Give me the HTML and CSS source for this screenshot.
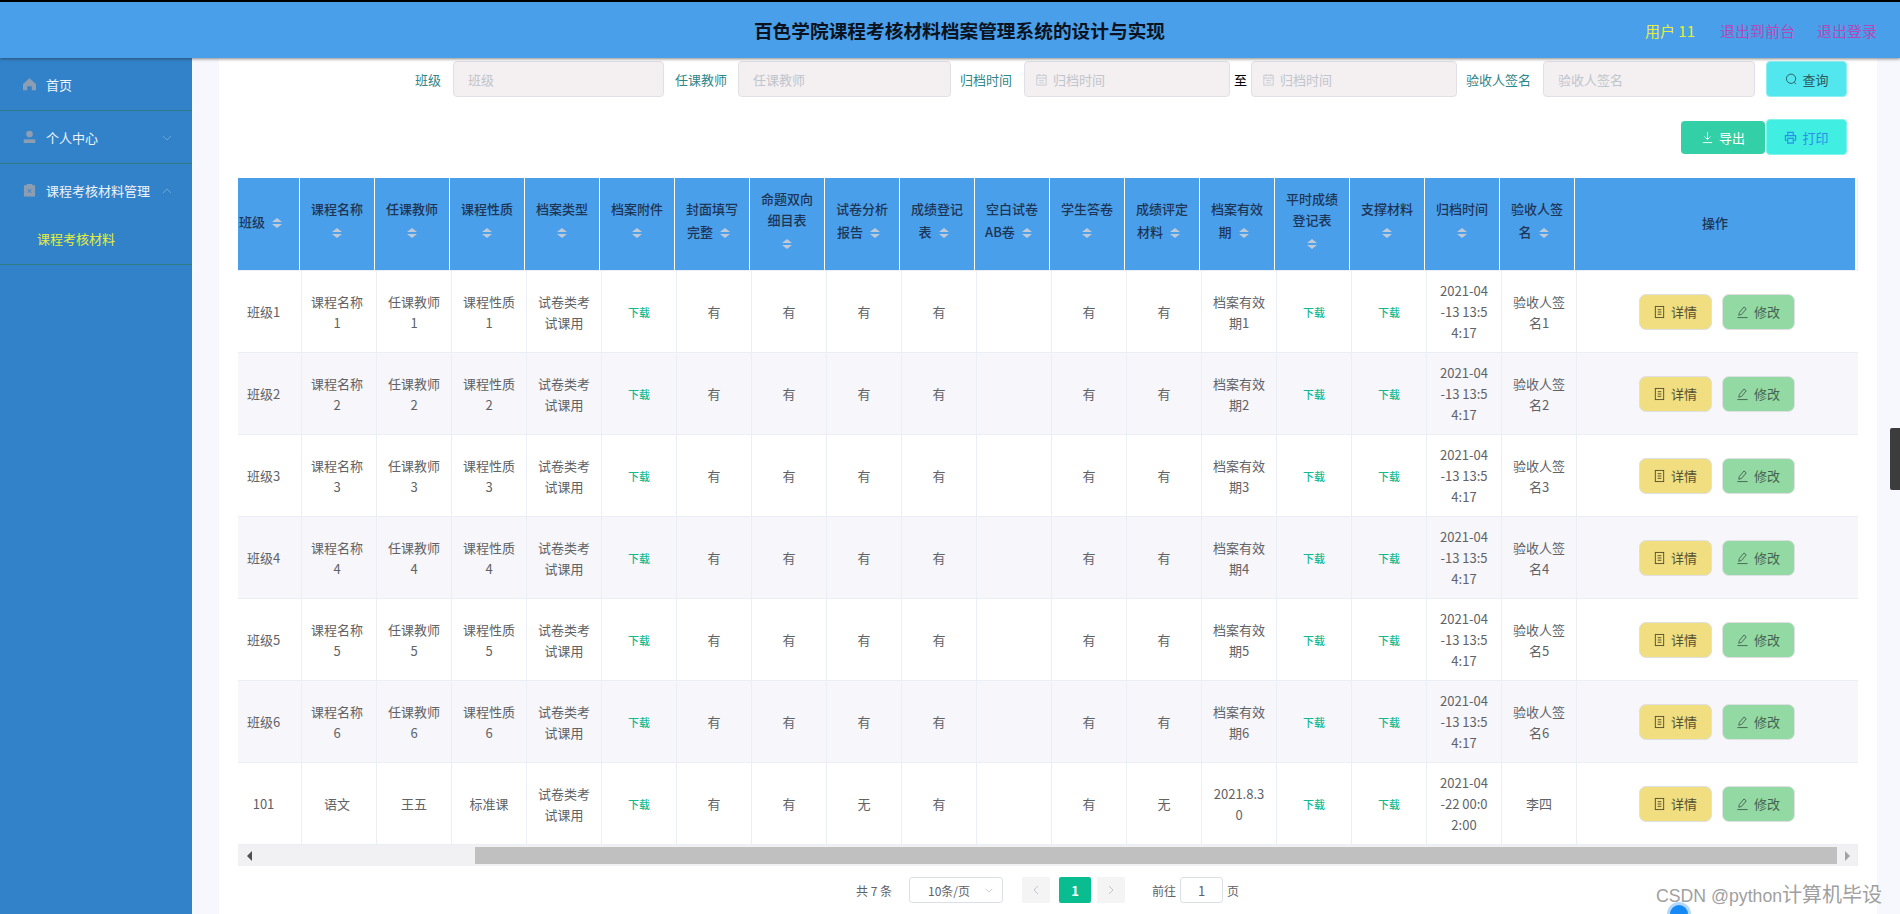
FILE: index.html
```html
<!DOCTYPE html>
<html lang="zh-CN">
<head>
<meta charset="utf-8">
<title>百色学院课程考核材料档案管理系统的设计与实现</title>
<link rel="stylesheet" href="styles.css">
</head>
<body>
<svg class="defs" width="0" height="0" aria-hidden="true">
  <symbol id="i-doc" viewBox="0 0 14 14"><rect x="2.5" y="1" width="9" height="12" fill="none" stroke="currentColor" stroke-width="1"/><path d="M5 4.5h4M5 7h4M5 9.5h4" stroke="currentColor" stroke-width="1" fill="none"/></symbol>
  <symbol id="i-edit" viewBox="0 0 14 14"><path d="M3 10.5 3.6 7.6 8.6 1.6 11 3.6 6 9.6ZM1.5 13H12.5" fill="none" stroke="currentColor" stroke-width="1"/></symbol>
  <symbol id="i-cal" viewBox="0 0 14 14"><rect x="2" y="2.5" width="10" height="10.5" fill="none" stroke="currentColor"/><path d="M2 5.5h10M4.5 8h5M4.5 10.5h5M4.5 1v2M9.5 1v2" stroke="currentColor" fill="none"/></symbol>
</svg>

<header class="topbar">
  <h1 class="title">百色学院课程考核材料档案管理系统的设计与实现</h1>
  <nav class="topnav">
    <span class="user">用户 11</span>
    <a class="out first">退出到前台</a>
    <a class="out">退出登录</a>
  </nav>
</header>

<div class="layout">
  <aside class="side">
    <div class="menu">
      <div class="menu-title">
        <svg class="mi" viewBox="0 0 14 14"><path d="M7 .8 14 7v6.6H9.4V9.4H4.6v4.2H0V7Z" fill="currentColor"/></svg>
        <span>首页</span>
      </div>
    </div>
    <div class="menu">
      <div class="menu-title">
        <svg class="mi" viewBox="0 0 14 14"><circle cx="7" cy="3.8" r="3.6" fill="currentColor"/><path d="M.8 9.5h12.4v4H.8Z" fill="currentColor"/></svg>
        <span>个人中心</span>
        <svg class="chev" viewBox="0 0 10 6"><path d="M1 1l4 4 4-4" fill="none" stroke="currentColor"/></svg>
      </div>
    </div>
    <div class="menu">
      <div class="menu-title">
        <svg class="mi" viewBox="0 0 14 14"><path d="M1 2h3V.5h6V2h3v12H1Z" fill="currentColor"/><path d="M5 6l4 4M9 6l-4 4" stroke="#3282c9" fill="none"/></svg>
        <span>课程考核材料管理</span>
        <svg class="chev" viewBox="0 0 10 6"><path d="M1 5l4-4 4 4" fill="none" stroke="currentColor"/></svg>
      </div>
      <div class="sub">课程考核材料</div>
    </div>
  </aside>

  <main class="main">
    <section class="card">
      <form class="filter">
        <label class="lab l-1">班级</label>
        <input class="inp w-s" placeholder="班级">
        <label class="lab l-2">任课教师</label>
        <input class="inp w-b" placeholder="任课教师">
        <label class="lab l-3">归档时间</label>
        <div class="date"><svg class="cal"><use href="#i-cal"/></svg><input class="dinp" placeholder="归档时间"></div>
        <span class="to">至</span>
        <div class="date"><svg class="cal"><use href="#i-cal"/></svg><input class="dinp" placeholder="归档时间"></div>
        <label class="lab l-4">验收人签名</label>
        <input class="inp w-a" placeholder="验收人签名">
        <button type="button" class="btn search">
          <svg class="bi" viewBox="0 0 14 14"><circle cx="6.5" cy="6.2" r="5" fill="none" stroke="currentColor"/><path d="M10 10l2 2" stroke="currentColor"/></svg>查询
        </button>
      </form>

      <div class="actions">
        <button type="button" class="btn export">
          <svg class="bi" viewBox="0 0 14 14"><path d="M7 1v8M3.8 6 7 9.2 10.2 6M2 12.5h10" fill="none" stroke="currentColor"/></svg>导出
        </button>
        <button type="button" class="btn print">
          <svg class="bi" viewBox="0 0 14 14"><path d="M4 5V1.5h6V5M4 10H1.5V5h11v5H10M4 8h6v5H4Z" fill="none" stroke="currentColor" stroke-width="1.2"/></svg>打印
        </button>
      </div>

      <div class="table-box">
        <table class="thead">
          <colgroup><col class="c-h1"><col span="17" class="c-n"><col class="c-hl"></colgroup>
          <tr>
            <th class="first-h">班级<span class="sort"><i></i><i></i></span></th>
            <th>课程名称<span class="sort"><i></i><i></i></span></th>
            <th>任课教师<span class="sort"><i></i><i></i></span></th>
            <th>课程性质<span class="sort"><i></i><i></i></span></th>
            <th>档案类型<span class="sort"><i></i><i></i></span></th>
            <th>档案附件<span class="sort"><i></i><i></i></span></th>
            <th>封面填写完整<span class="sort"><i></i><i></i></span></th>
            <th>命题双向细目表<span class="sort"><i></i><i></i></span></th>
            <th>试卷分析报告<span class="sort"><i></i><i></i></span></th>
            <th>成绩登记表<span class="sort"><i></i><i></i></span></th>
            <th class="ab">空白试卷AB卷<span class="sort"><i></i><i></i></span></th>
            <th>学生答卷<span class="sort"><i></i><i></i></span></th>
            <th>成绩评定材料<span class="sort"><i></i><i></i></span></th>
            <th>档案有效期<span class="sort"><i></i><i></i></span></th>
            <th>平时成绩登记表<span class="sort"><i></i><i></i></span></th>
            <th>支撑材料<span class="sort"><i></i><i></i></span></th>
            <th>归档时间<span class="sort"><i></i><i></i></span></th>
            <th>验收人签名<span class="sort"><i></i><i></i></span></th>
            <th>操作</th>
          </tr>
        </table>
        <table class="tbody">
          <colgroup><col class="c-b1"><col span="17" class="c-n"><col class="c-bl"></colgroup>
          <tr><td>班级1</td><td>课程名称1</td><td>任课教师1</td><td>课程性质1</td><td>试卷类考试课用</td><td><a class="dl">下载</a></td><td>有</td><td>有</td><td>有</td><td>有</td><td></td><td>有</td><td>有</td><td>档案有效期1</td><td><a class="dl">下载</a></td><td><a class="dl">下载</a></td><td class="tm">2021-04<br>-13 13:5<br>4:17</td><td>验收人签名1</td><td><div class="ops"><button type="button" class="op detail"><svg class="oi"><use href="#i-doc"/></svg>详情</button><button type="button" class="op edit"><svg class="oi"><use href="#i-edit"/></svg>修改</button></div></td></tr>
          <tr><td>班级2</td><td>课程名称2</td><td>任课教师2</td><td>课程性质2</td><td>试卷类考试课用</td><td><a class="dl">下载</a></td><td>有</td><td>有</td><td>有</td><td>有</td><td></td><td>有</td><td>有</td><td>档案有效期2</td><td><a class="dl">下载</a></td><td><a class="dl">下载</a></td><td class="tm">2021-04<br>-13 13:5<br>4:17</td><td>验收人签名2</td><td><div class="ops"><button type="button" class="op detail"><svg class="oi"><use href="#i-doc"/></svg>详情</button><button type="button" class="op edit"><svg class="oi"><use href="#i-edit"/></svg>修改</button></div></td></tr>
          <tr><td>班级3</td><td>课程名称3</td><td>任课教师3</td><td>课程性质3</td><td>试卷类考试课用</td><td><a class="dl">下载</a></td><td>有</td><td>有</td><td>有</td><td>有</td><td></td><td>有</td><td>有</td><td>档案有效期3</td><td><a class="dl">下载</a></td><td><a class="dl">下载</a></td><td class="tm">2021-04<br>-13 13:5<br>4:17</td><td>验收人签名3</td><td><div class="ops"><button type="button" class="op detail"><svg class="oi"><use href="#i-doc"/></svg>详情</button><button type="button" class="op edit"><svg class="oi"><use href="#i-edit"/></svg>修改</button></div></td></tr>
          <tr><td>班级4</td><td>课程名称4</td><td>任课教师4</td><td>课程性质4</td><td>试卷类考试课用</td><td><a class="dl">下载</a></td><td>有</td><td>有</td><td>有</td><td>有</td><td></td><td>有</td><td>有</td><td>档案有效期4</td><td><a class="dl">下载</a></td><td><a class="dl">下载</a></td><td class="tm">2021-04<br>-13 13:5<br>4:17</td><td>验收人签名4</td><td><div class="ops"><button type="button" class="op detail"><svg class="oi"><use href="#i-doc"/></svg>详情</button><button type="button" class="op edit"><svg class="oi"><use href="#i-edit"/></svg>修改</button></div></td></tr>
          <tr><td>班级5</td><td>课程名称5</td><td>任课教师5</td><td>课程性质5</td><td>试卷类考试课用</td><td><a class="dl">下载</a></td><td>有</td><td>有</td><td>有</td><td>有</td><td></td><td>有</td><td>有</td><td>档案有效期5</td><td><a class="dl">下载</a></td><td><a class="dl">下载</a></td><td class="tm">2021-04<br>-13 13:5<br>4:17</td><td>验收人签名5</td><td><div class="ops"><button type="button" class="op detail"><svg class="oi"><use href="#i-doc"/></svg>详情</button><button type="button" class="op edit"><svg class="oi"><use href="#i-edit"/></svg>修改</button></div></td></tr>
          <tr><td>班级6</td><td>课程名称6</td><td>任课教师6</td><td>课程性质6</td><td>试卷类考试课用</td><td><a class="dl">下载</a></td><td>有</td><td>有</td><td>有</td><td>有</td><td></td><td>有</td><td>有</td><td>档案有效期6</td><td><a class="dl">下载</a></td><td><a class="dl">下载</a></td><td class="tm">2021-04<br>-13 13:5<br>4:17</td><td>验收人签名6</td><td><div class="ops"><button type="button" class="op detail"><svg class="oi"><use href="#i-doc"/></svg>详情</button><button type="button" class="op edit"><svg class="oi"><use href="#i-edit"/></svg>修改</button></div></td></tr>
          <tr><td>101</td><td>语文</td><td>王五</td><td>标准课</td><td>试卷类考试课用</td><td><a class="dl">下载</a></td><td>有</td><td>有</td><td>无</td><td>有</td><td></td><td>有</td><td>无</td><td>2021.8.30</td><td><a class="dl">下载</a></td><td><a class="dl">下载</a></td><td class="tm">2021-04<br>-22 00:0<br>2:00</td><td>李四</td><td><div class="ops"><button type="button" class="op detail"><svg class="oi"><use href="#i-doc"/></svg>详情</button><button type="button" class="op edit"><svg class="oi"><use href="#i-edit"/></svg>修改</button></div></td></tr>
        </table>
        <div class="hscroll">
          <span class="arrow left"></span>
          <div class="track"><div class="thumb"></div></div>
          <span class="arrow right"></span>
        </div>
      </div>

      <div class="pager">
        <span class="total">共 7 条</span>
        <div class="size"><span>10条/页</span><svg class="size-chev" viewBox="0 0 10 6"><path d="M1 1l4 4 4-4" fill="none" stroke="currentColor"/></svg></div>
        <button type="button" class="pg prev"><svg viewBox="0 0 6 10" class="pg-i"><path d="M5 1 1 5l4 4" fill="none" stroke="currentColor"/></svg></button>
        <button type="button" class="pg on">1</button>
        <button type="button" class="pg next"><svg viewBox="0 0 6 10" class="pg-i"><path d="M1 1l4 4-4 4" fill="none" stroke="currentColor"/></svg></button>
        <span class="goto">前往</span>
        <input class="jump" value="1">
        <span class="page-word">页</span>
      </div>
    </section>
  </main>
</div>

<div class="tab"></div>
<div class="mark">CSDN @python<span class="mark-cjk">计算机毕设</span></div>
<div class="dot"></div>
</body>
</html>
```
FILE: styles.css
```css
* { box-sizing: border-box; }
html, body { margin: 0; height: 100%; overflow: hidden; }
body {
  font-family: "Noto Sans CJK SC", "Noto Sans", sans-serif;
  font-size: 13px;
  color: #606266;
  background: #f7f8fd;
  display: flex;
  flex-direction: column;
}
.defs { position: absolute; }

/* top bar */
.topbar {
  height: 58px;
  flex: none;
  border-top: 2px solid #000;
  background: #4a9fea;
  box-shadow: 0 1px 3px rgba(40, 40, 40, .55);
  display: flex;
  align-items: center;
  justify-content: center;
  padding-left: 19px;
  position: relative;
  z-index: 2;
}
.title { margin: 0; font-size: 18.7px; line-height: 26px; font-weight: 700; color: #0b1220; }
.topnav {
  position: absolute;
  right: 23px;
  top: 0;
  height: 56px;
  display: flex;
  align-items: center;
  font-size: 15px;
}
.user { color: #e6ee3e; font-size: 15px; }
.out { color: #b348b8; margin-left: 22px; }
.out.first { margin-left: 25px; }

/* layout */
.layout { flex: 1; display: flex; min-height: 0; }
.side { width: 192px; flex: none; background: #3282c9; }
.menu { border-bottom: 1px solid #2f7c86; }
.menu-title {
  height: 52px;
  display: flex;
  align-items: center;
  padding-left: 23px;
  color: #eef4fa;
  font-size: 13px;
  position: relative;
}
.mi { width: 13px; height: 14px; margin-right: 10px; color: #8d9db2; flex: none; }
.chev { position: absolute; right: 20px; top: 24px; width: 10px; height: 6px; color: #6da5d6; }
.sub { height: 48px; line-height: 46px; padding-left: 37px; color: #e6ee3e; font-size: 13px; }

.main { flex: 1; min-width: 0; padding: 0 23px 0 27px; }
.card { height: 100%; background: #fff; padding: 3px 19px 0; }

/* filter */
.filter { height: 36px; display: flex; align-items: center; padding-left: 177px; }
.lab { color: #2f8588; font-size: 13px; margin-right: 12px; white-space: nowrap; }
.l-2 { margin-left: 11px; margin-right: 11px; }
.l-3 { margin-left: 9px; }
.l-4 { margin-left: 9px; }
.inp, .date {
  height: 36px;
  background: #f4f0f1;
  border: 1px solid #e2e0e7;
  border-radius: 4px;
  font: 13px "Noto Sans CJK SC", sans-serif;
  color: #606266;
}
.inp { padding: 0 14px; outline: 0; }
.inp::placeholder, .dinp::placeholder { color: #c0c4cc; opacity: 1; }
.w-s { width: 211px; }
.w-a { width: 212px; }
.w-b { width: 213px; }
.date { width: 206px; display: flex; align-items: center; padding-left: 10px; }
.cal { width: 13px; height: 13px; color: #c6cad1; flex: none; margin-right: 5px; }
.dinp { flex: 1; min-width: 0; border: 0; outline: 0; background: transparent; padding: 0; font: inherit; }
.to { color: #000; width: 21px; padding-left: 4px; font-size: 13px; }

/* buttons */
.btn {
  width: 81px;
  height: 36px;
  padding: 0;
  border-radius: 4px;
  border: 1px solid transparent;
  font: 13px "Noto Sans CJK SC", sans-serif;
  display: flex;
  align-items: center;
  justify-content: center;
}
.bi { width: 13px; height: 13px; margin-right: 5px; flex: none; }
.search { margin-left: 11px; background: #52e7ee; border-color: #8eeff2; color: #2c5a60; }
.actions { margin-top: 22px; height: 36px; display: flex; justify-content: flex-end; align-items: center; gap: 1px; padding-right: 11px; }
.export { width: 84px; height: 33px; background: #33cfa6; color: #fff; border-radius: 4px; }
.print { background: #40efe2; border-color: #7ff4ec; color: #2a8ee8; }

/* table */
.table-box { margin-top: 23px; border-right: 1px solid #ebeef5; width: 1620px; }
table { border-collapse: separate; border-spacing: 0; table-layout: fixed; }
.thead { width: 1617px; }
.tbody { width: 1620px; border-top: 1px solid #ebeef5; }
.c-h1 { width: 62px; }
.c-b1 { width: 64px; }
.c-n { width: 75px; }
.c-hl { width: 280px; }
.c-bl { width: 281px; }
th {
  height: 92px;
  padding: 0 10px 3px;
  background: #4a9fea;
  border-right: 1px solid #fff;
  color: #1d3557;
  font-size: 13px;
  line-height: 21px;
  font-weight: 500;
  text-align: center;
  word-break: break-all;
}
th:last-child { border-right: 0; }
.first-h { padding-left: 1px; padding-right: 0; text-align: left; }
.ab { padding: 0 9px 3px; }
.sort {
  display: inline-flex;
  flex-direction: column;
  align-items: center;
  justify-content: center;
  gap: 2px;
  width: 24px;
  height: 28px;
  vertical-align: middle;
}
.sort i { width: 0; height: 0; border: 5px solid transparent; border-top-width: 0; border-bottom: 4px solid #c0c9d6; }
.sort i + i { border-bottom-width: 0; border-top: 4px solid #c0c9d6; }
td {
  height: 82px;
  padding: 0 10px;
  border-right: 1px solid #ebeef5;
  border-bottom: 1px solid #ebeef5;
  text-align: center;
  font-size: 13px;
  line-height: 21px;
  color: #606266;
  word-break: break-all;
  background: #fff;
}
td:first-child { padding: 0 12px 0 0; }
td:nth-child(2) { padding: 0 12px 0 8px; }
tr:nth-child(even) td { background: #f6f6fb; }
td:last-child { border-right: 0; padding: 0 11px 0 9px; }
.dl { color: #14b98f; font-size: 11px; font-weight: 500; }
.tm { padding: 0; }
.ops { display: flex; justify-content: center; gap: 10px; }
.op {
  width: 73px;
  height: 36px;
  padding: 0;
  border: 1px solid #dfe0e4;
  border-radius: 7px;
  font: 13px "Noto Sans CJK SC", sans-serif;
  display: flex;
  align-items: center;
  justify-content: center;
}
.oi { width: 13px; height: 14px; margin-right: 5px; flex: none; }
.detail { background: #f0de80; color: #55502f; }
.edit { background: #92d9a4; color: #46624f; }

.hscroll { height: 21px; background: #f1f0f3; display: flex; align-items: center; }
.arrow { width: 0; height: 0; border: 5px solid transparent; flex: none; }
.arrow.left { border-left-width: 0; border-right: 5px solid #505050; margin: 0 223px 0 9px; }
.arrow.right { border-right-width: 0; border-left: 5px solid #a3a3a3; margin: 0 7px 0 8px; }
.track { flex: 1; height: 17px; }
.thumb { height: 100%; background: #c0c0c0; }

/* pager */
.pager { margin-top: 11px; height: 26px; display: flex; align-items: center; padding-left: 618px; font-size: 12px; color: #606266; }
.total { width: 53px; white-space: nowrap; }
.size {
  width: 94px;
  height: 26px;
  border: 1px solid #dcdfe6;
  border-radius: 3px;
  padding-left: 18px;
  display: flex;
  align-items: center;
  justify-content: space-between;
}
.size-chev { width: 8px; height: 5px; margin-right: 9px; color: #c0c4cc; }
.pg {
  width: 28px;
  height: 26px;
  padding: 0;
  border: 0;
  border-radius: 2px;
  background: #f4f4f5;
  color: #c0c4cc;
  display: flex;
  align-items: center;
  justify-content: center;
  font: 700 13px "Noto Sans CJK SC", sans-serif;
}
.pg-i { width: 6px; height: 10px; }
.prev { margin-left: 19px; }
.on { width: 32px; margin: 0 6px 0 9px; background: #0abd90; color: #fff; }
.goto { margin-left: 27px; width: 28px; white-space: nowrap; }
.jump {
  width: 43px;
  height: 26px;
  border: 1px solid #dcdfe6;
  border-radius: 3px;
  text-align: center;
  outline: 0;
  font: 13px "Noto Sans CJK SC", sans-serif;
  color: #606266;
  padding: 0;
}
.page-word { margin-left: 4px; }

/* overlays */
.tab { position: absolute; right: 0; top: 428px; width: 10px; height: 62px; background: #3c3c3c; border-radius: 2px 0 0 2px; }
.mark {
  position: absolute;
  left: 1656px;
  top: 883px;
  font: 17.7px/24px "Liberation Sans", "Noto Sans CJK SC", sans-serif;
  color: #a0a0a0;
  white-space: nowrap;
}
.mark-cjk { font-size: 20px; }
.dot {
  position: absolute;
  left: 1670px;
  top: 905px;
  width: 18px;
  height: 18px;
  border-radius: 50%;
  background: #1689f5;
  box-shadow: 0 0 0 3px rgba(130, 190, 245, .6);
}
```
